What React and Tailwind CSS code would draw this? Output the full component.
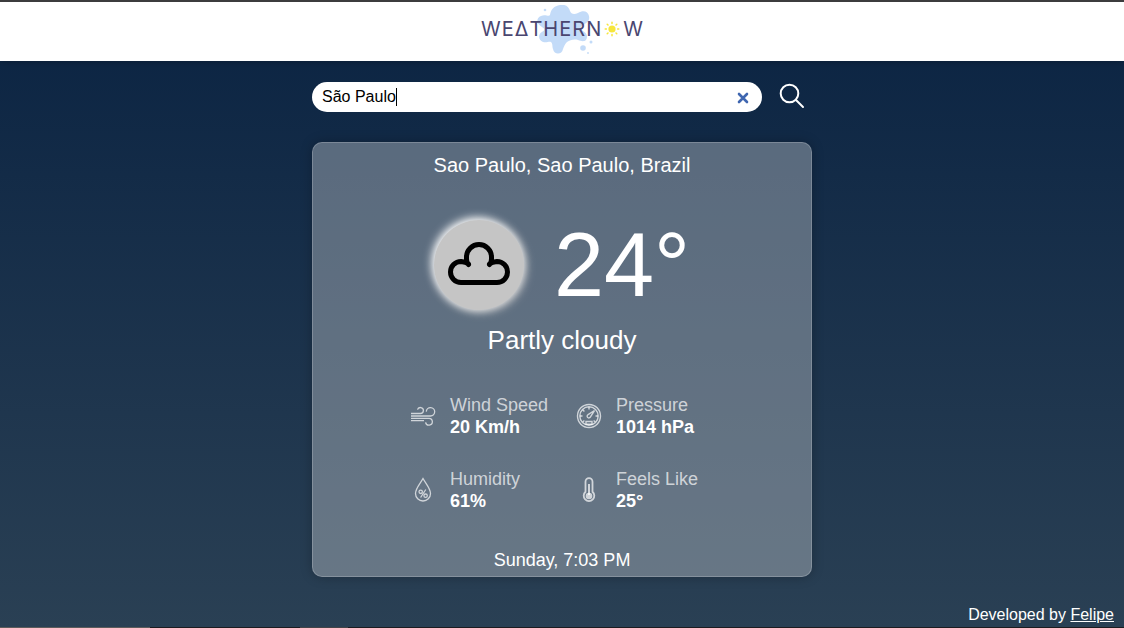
import { useState } from "react";

function Logo() {
  return (
    <a href="#home" aria-label="WeatherNow" className="relative isolate flex items-center gap-px text-xl leading-6 font-normal text-[#4a4670] font-['Inter',sans-serif]">
      <svg aria-hidden="true" viewBox="0 0 60 50" className="absolute -top-3 left-[54px] -z-10 h-[50px] w-[60px]" fill="#c3dbf8">
        <path d="M15 10C16 4 19 1 25 0c6-1 9 2 10 6 1 3 4 4 8 2 5-3 10-2 11 3 1 5-2 7-6 9-3 2-3 4 0 6 4 2 5 6 3 9-2 2-5 1-8 0-4-1-8 0-11 2-2 2-3 4-4 7-1 6-9 6-10 0-1-3 0-5-2-7-2-1-4 1-8 0-5-2-5-8-1-10 3-2 3-3 0-5C1 19 1 13 6 11c4-2 8 1 9-1z" />
        <circle cx="10" cy="5" r="1.3" />
        <circle cx="48" cy="43" r="2.800" />
        <circle cx="56" cy="37" r="1.500" />
        <circle cx="53" cy="48" r="0.900" />
      </svg>
      {["W", "E", "Δ", "T", "H", "E", "R", "N"].map((letter, i) => (
        <span key={i}>{letter}</span>
      ))}
      <svg aria-hidden="true" viewBox="0 0 16 16" className="mx-0.5 size-4" stroke="#f6e63c" strokeWidth="1.5" strokeLinecap="round">
        <circle cx="8" cy="8" r="3.6" fill="#f6e63c" stroke="none" />
        <path d="M8 1.2v1.2M8 13.6v1.2M1.2 8h1.2M13.6 8h1.2M3.2 3.2l.8.8M12 12l.8.8M3.2 12.8l.8-.8M12 4l.8-.8" />
      </svg>
      <span>W</span>
    </a>
  );
}

function WindIcon() {
  return (
    <svg aria-hidden="true" viewBox="0 0 26 26" className="size-[26px]" fill="none" stroke="currentColor" strokeWidth="1.300">
      <path d="M1 10.500h9.500a3 3 0 1 0-3-3.800M1 13h19.500a4.200 4.200 0 1 0-4.200-4.400M1 15.300h18a3.400 3.400 0 1 1-3.400 4M1 17.600h13" />
    </svg>
  );
}

function GaugeIcon() {
  return (
    <svg aria-hidden="true" viewBox="0 0 26 26" className="size-[26px]" fill="none" stroke="currentColor" strokeWidth="1.400">
      <circle cx="13" cy="13" r="11.500" />
      <circle cx="13" cy="13" r="9.200" />
      <path d="M13 4v2.500M4 13h2.500M19.500 13H22M6.700 6.700l1.700 1.700M6.700 19l1.700-1.500M19.300 19l-1.700-1.500M18.500 7.500l-6.400 4.200a1.700 1.700 0 1 0 2.200 2.400zM10 18.500h6v2.700h-6z" />
    </svg>
  );
}

function DropIcon() {
  return (
    <svg aria-hidden="true" viewBox="0 0 26 26" className="size-[26px]" fill="none" stroke="currentColor" strokeWidth="1.300">
      <path d="M13 1.500c3 5.500 7.500 10 7.500 15a7.500 7.500 0 0 1-15 0c0-5 4.500-9.500 7.500-15z" />
      <path d="M15.800 12.500l-5.200 8" />
      <circle cx="10.700" cy="14.800" r="1.700" />
      <circle cx="15.600" cy="18.700" r="1.700" />
    </svg>
  );
}

function ThermometerIcon() {
  return (
    <svg aria-hidden="true" viewBox="0 0 26 26" className="size-[26px]" fill="none" stroke="currentColor" strokeWidth="1.800">
      <path d="M9.500 14.800V4.700a3.500 3.500 0 0 1 7 0v10.100a5.300 5.300 0 1 1-7 0z" />
      <circle cx="13" cy="19" r="3.300" fill="currentColor" stroke="none" />
      <path d="M13 7v11" strokeWidth="2" />
    </svg>
  );
}

const details = [
  { label: "Wind Speed", value: "20 Km/h", Icon: WindIcon },
  { label: "Pressure", value: "1014 hPa", Icon: GaugeIcon },
  { label: "Humidity", value: "61%", Icon: DropIcon },
  { label: "Feels Like", value: "25°", Icon: ThermometerIcon },
];

export default function App() {
  const [city, setCity] = useState("São Paulo");
  return (
    <div className="flex min-h-screen flex-col bg-linear-to-b from-[#0a2342] to-[#2a4054] font-['Liberation_Sans',Arial,sans-serif] text-white">
      <header className="flex h-[61px] items-center justify-center border-t-2 border-[#3c3c3e] bg-white pb-1.5 shadow-[0_0_8px_rgba(0,0,0,0.3)]">
        <Logo />
      </header>

      <main className="mx-auto w-full max-w-[500px] pt-[21px]">
        <form role="search" onSubmit={(e) => e.preventDefault()} className="flex items-start gap-4">
          <div className="flex h-[30px] w-[450px] items-center rounded-full bg-white pr-3 pl-2.5">
            <div className="relative flex min-w-0 flex-1 text-base text-black">
              <input
                aria-label="City"
                value={city}
                onChange={(e) => setCity(e.target.value)}
                className="w-full caret-transparent outline-none"
              />
              <span aria-hidden="true" className="pointer-events-none absolute inset-y-0 left-0 flex items-center">
                <span className="invisible whitespace-pre">{city}</span>
                <span className="h-[18px] w-px bg-black" />
              </span>
            </div>
            <button type="button" aria-label="Clear" onClick={() => setCity("")} className="text-[#3f66b0]">
              <svg aria-hidden="true" viewBox="0 0 14 14" className="size-3.5" stroke="currentColor" strokeWidth="2.600" strokeLinecap="round">
                <path d="M3 4l8 8M11 4l-8 8" />
              </svg>
            </button>
          </div>
          <button type="submit" aria-label="Search">
            <svg aria-hidden="true" viewBox="0 0 28 28" className="size-7" fill="none" stroke="currentColor" strokeWidth="2" strokeLinecap="round">
              <circle cx="11.500" cy="11.500" r="8.800" />
              <path d="M18 18l7 7" />
            </svg>
          </button>
        </form>

        <section className="mt-[30px] flex flex-col items-center rounded-[10px] border border-white/20 bg-[#c9ced3]/40 pt-2.5 pb-1 shadow-[0_0_12px_rgba(0,0,0,0.25)]">
          <h1 className="text-xl leading-6">Sao Paulo, Sao Paulo, Brazil</h1>

          <div className="mt-[34px] flex h-[108px] items-center gap-[30px]">
            <div className="flex size-[90px] items-center justify-center rounded-full bg-[#c5c5c5] shadow-[-2px_-2px_10px_#fff,2px_2px_10px_#c5c5c5]">
              <svg aria-hidden="true" viewBox="0 0 62 43" className="mb-1 h-[43px] w-[62px]" fill="none" stroke="#000" strokeWidth="5" strokeLinecap="round">
                <path d="M20.500 22C18.500 20 13 19.500 13 19.500a10.500 10.500 0 0 0 0 21h36a10.500 10.500 0 0 0 0-21s-5.500.5-7.500 2.500M20.500 22.500C18 20 18.500 17 18.500 15a12.500 12.500 0 0 1 25 0c0 2 .5 5-2 7.500" />
              </svg>
            </div>
            <p className="text-[90px] leading-[108px]">24°</p>
          </div>

          <p className="mt-1.5 text-[26px] leading-[30px]">Partly cloudy</p>

          <dl className="mt-[39px] grid grid-cols-2 gap-x-7 gap-y-[30px]">
            {details.map(({ label, value, Icon }) => (
              <div key={label} className="grid grid-cols-[26px_auto] items-center justify-start gap-x-3.5 text-lg leading-[22px]">
                <span className="row-span-2 text-white/70"><Icon /></span>
                <dt className="text-white/70">{label}</dt>
                <dd className="font-bold">{value}</dd>
              </div>
            ))}
          </dl>

          <p className="mt-9 text-lg leading-6">Sunday, 7:03 PM</p>
        </section>
      </main>

      <footer className="mt-auto">
        <p className="pr-2.5 text-right text-base">
          Developed by <a href="#felipe" className="underline">Felipe</a>
        </p>
        <div aria-hidden="true" className="flex h-px bg-[#1c1c20]">
          <span className="mr-[150px] w-[150px] bg-[#5c5c5c]" />
          <span className="w-12 bg-[#444448]" />
        </div>
      </footer>
    </div>
  );
}
